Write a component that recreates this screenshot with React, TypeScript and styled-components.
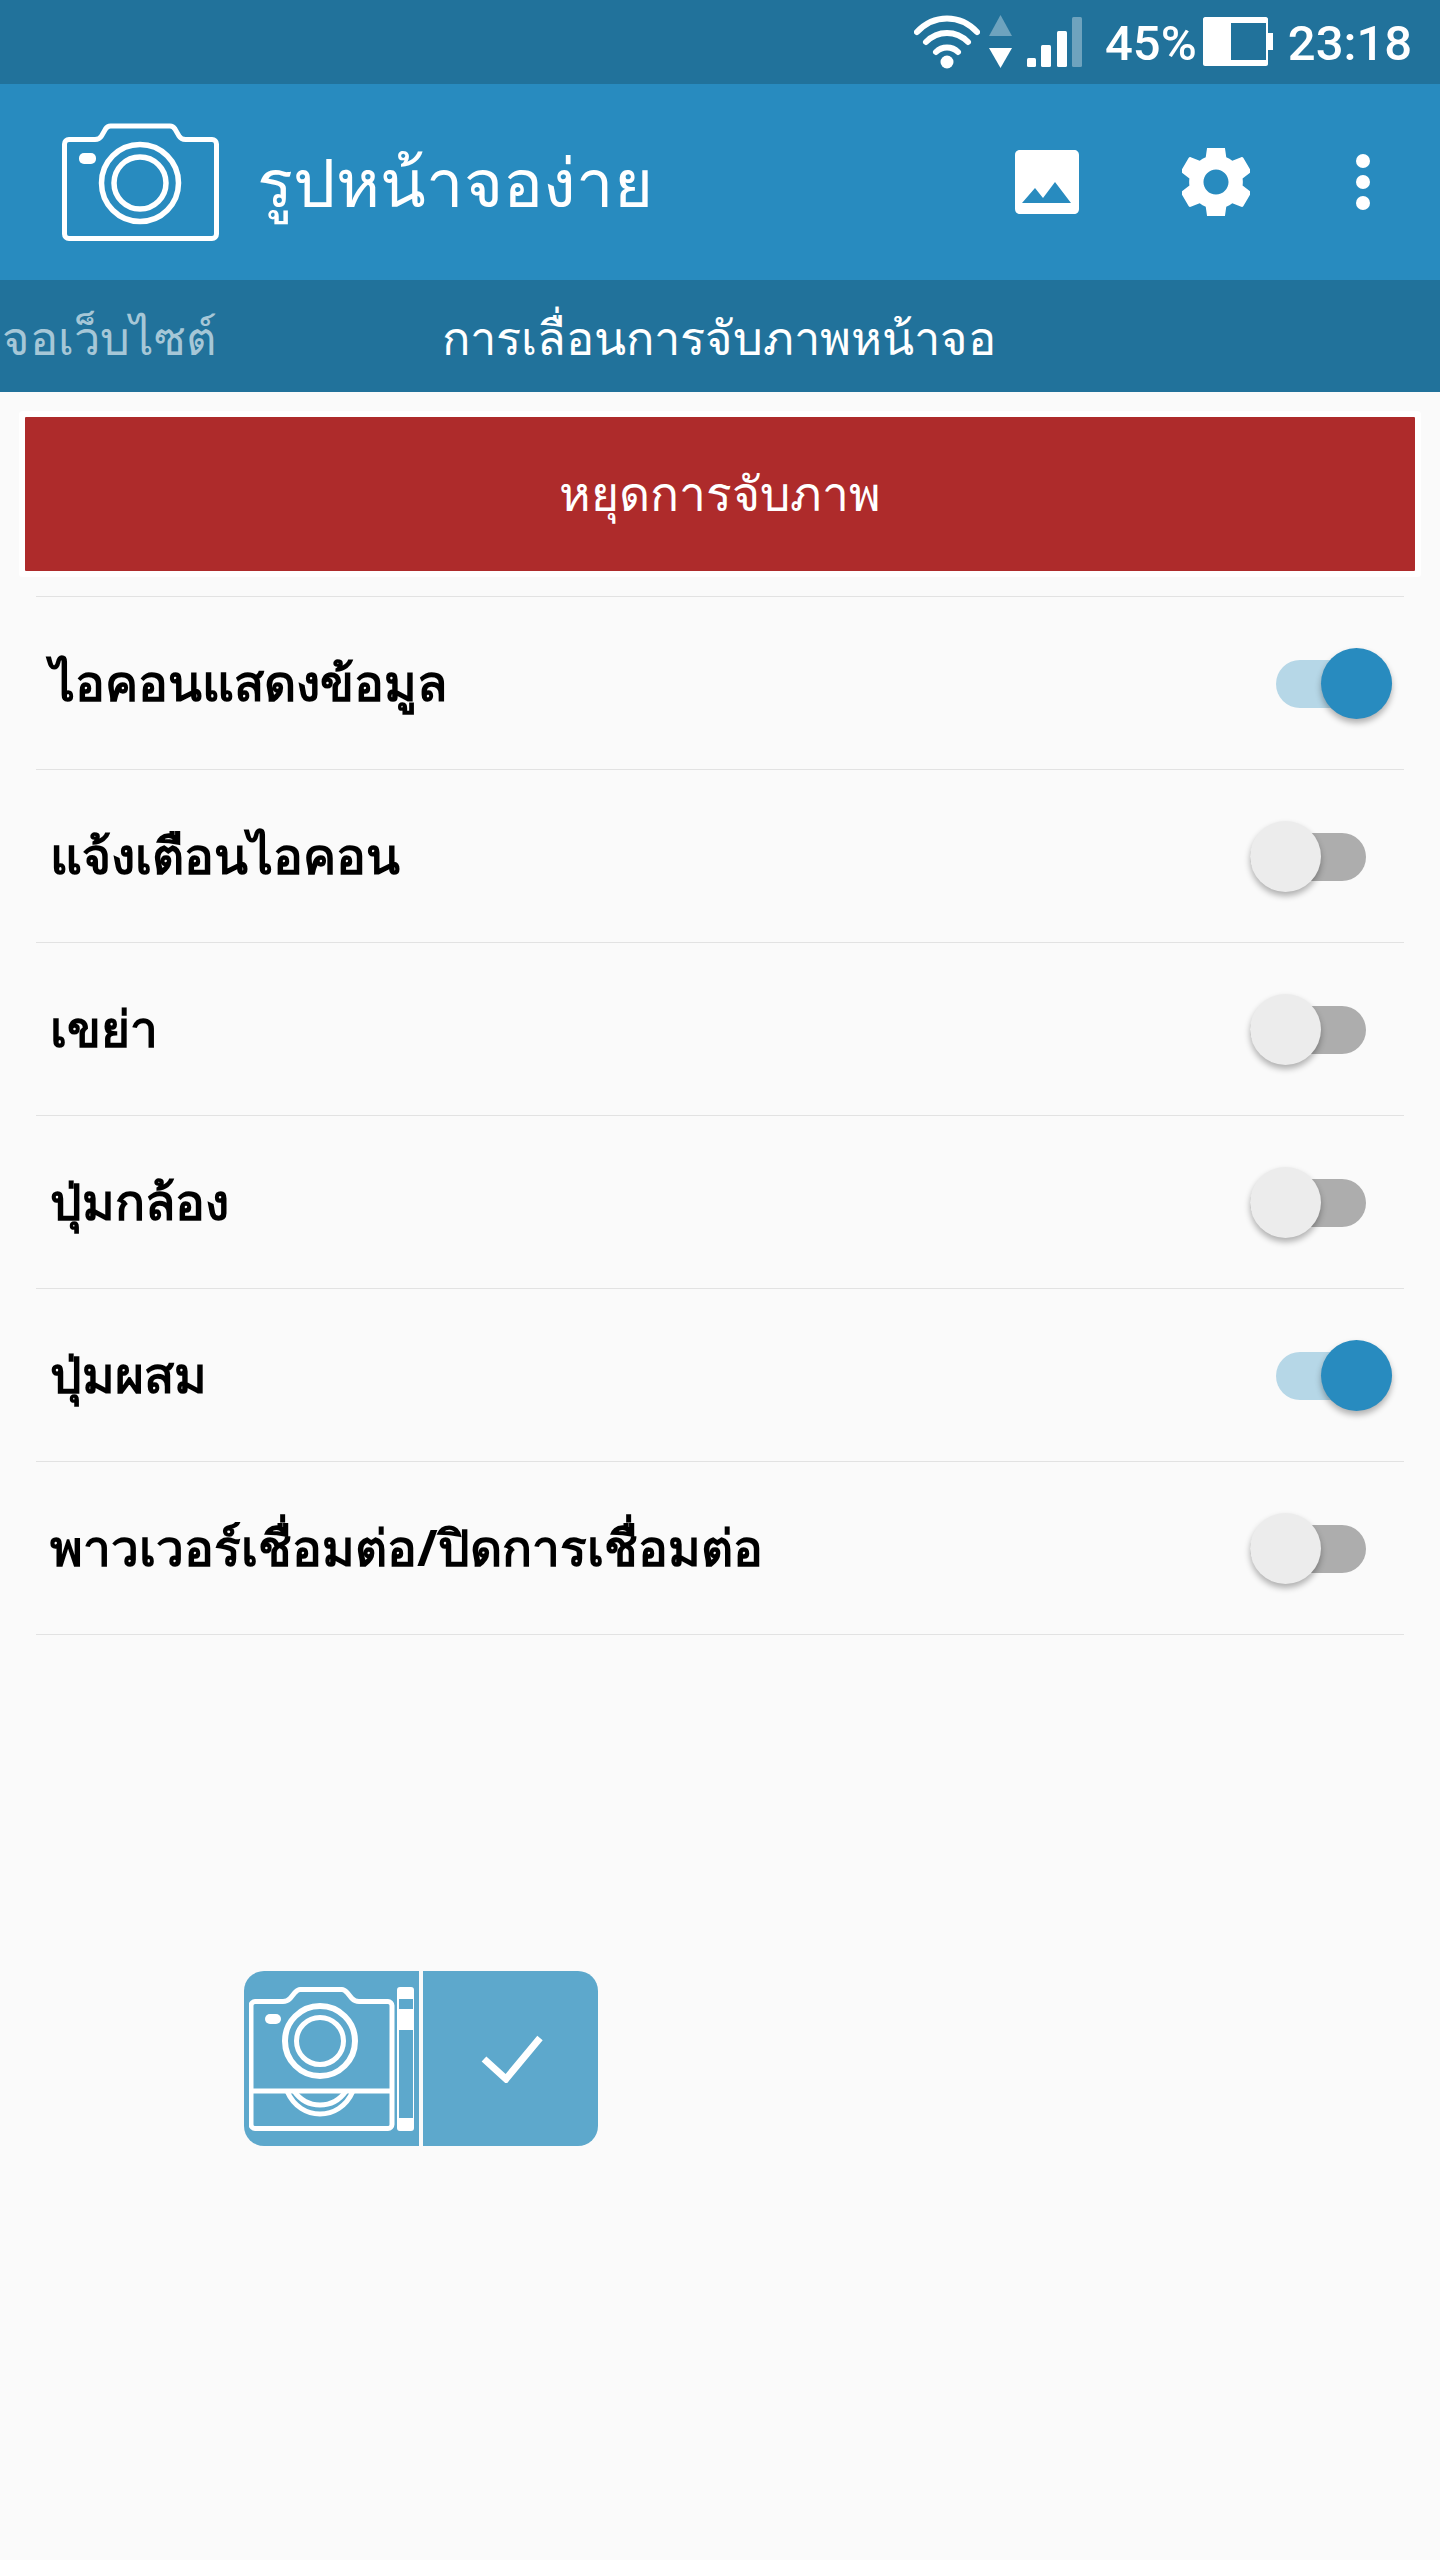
import React from "react";
import styled, { createGlobalStyle } from "styled-components";

const Global = createGlobalStyle`
  html, body { margin: 0; padding: 0; background: #fafafa; }
  * { box-sizing: border-box; }
  body { font-family: "Noto Sans", "Roboto", "DejaVu Sans", sans-serif; }
`;

const Page = styled.div`
  width: 1440px;
  height: 2560px;
  background: #fafafa;
  overflow: hidden;
`;

const StatusBar = styled.div`
  height: 84px;
  background: #21729b;
  display: flex;
  align-items: flex-start;
  padding: 15px 0 0 914px;
  color: #fff;
`;

const StatusText = styled.span<{ $left: number }>`
  font-family: Roboto, sans-serif;
  font-size: 49px;
  font-weight: 500;
  line-height: 58px;
  margin-left: ${(p) => p.$left}px;
  white-space: nowrap;
`;

const StatusSvg = styled.svg<{ $left?: number; $top?: number }>`
  display: block;
  flex: none;
  margin-left: ${(p) => p.$left ?? 0}px;
  margin-top: ${(p) => p.$top ?? 0}px;
`;

const AppBar = styled.header`
  height: 196px;
  background: #288bbf;
  display: flex;
  align-items: center;
  padding-left: 62px;
  color: #fff;
`;

const Logo = styled.svg`
  display: block;
  flex: none;
`;

const Title = styled.h1`
  margin: 3px 0 0 38px;
  font-size: 67px;
  font-weight: 400;
  white-space: nowrap;
  flex: 1;
`;

const Actions = styled.div`
  display: flex;
  align-items: center;
  padding-right: 70px;
`;

const ActionIcon = styled.svg<{ $left: number }>`
  display: block;
  margin-left: ${(p) => p.$left}px;
`;

const TabStrip = styled.nav`
  height: 112px;
  background: #21729b;
  display: flex;
  align-items: center;
  padding: 5px 0 0 2px;
  overflow: hidden;
`;

const Tab = styled.div<{ $active?: boolean }>`
  font-size: 47px;
  color: ${(p) => (p.$active ? "#fff" : "#a6c7d7")};
  white-space: nowrap;
  margin-left: ${(p) => (p.$active ? "222px" : "0")};
  width: ${(p) => (p.$active ? "auto" : "218px")};
`;

const Content = styled.main`
  padding: 25px 25px 0;
`;

const StopButton = styled.button`
  display: block;
  width: 1390px;
  height: 154px;
  border: 0;
  border-radius: 1px;
  background: #ae2b2b;
  color: #fff;
  font-family: inherit;
  font-size: 48px;
  box-shadow: 0 0 0 6px #fff;
`;

const List = styled.ul`
  list-style: none;
  margin: 25px 11px 0;
  padding: 0;
  border-top: 1px solid #e2e2e2;
`;

const Row = styled.li`
  height: 173px;
  display: flex;
  align-items: center;
  padding: 0 12px 0 14px;
  border-bottom: 1px solid #e2e2e2;
`;

const RowLabel = styled.span`
  flex: 1;
  font-size: 49.7px;
  font-weight: 700;
  color: #000;
  white-space: nowrap;
`;

const Switch = styled.div<{ $on?: boolean }>`
  position: relative;
  width: 116px;
  height: 48px;
  margin-top: 2px;
  margin-right: ${(p) => (p.$on ? 0 : 26)}px;
  border-radius: 24px;
  background: ${(p) => (p.$on ? "#b6d7e7" : "#adadad")};
`;

const Thumb = styled.span<{ $on?: boolean }>`
  position: absolute;
  top: -12px;
  ${(p) => (p.$on ? "right: 0;" : "left: 0;")}
  width: 71px;
  height: 71px;
  border-radius: 50%;
  background: ${(p) => (p.$on ? "#288bbf" : "#ececec")};
  box-shadow: 0 4px 6px rgba(0, 0, 0, 0.3);
`;

const Widget = styled.div`
  display: flex;
  width: 354px;
  height: 175px;
  margin: 336px 0 0 219px;
  border-radius: 20px;
  overflow: hidden;
  gap: 4px;
`;

const WidgetCell = styled.div<{ $check?: boolean }>`
  width: 175px;
  background: #5da8cc;
  display: flex;
  align-items: ${(p) => (p.$check ? "center" : "flex-start")};
  justify-content: ${(p) => (p.$check ? "center" : "flex-start")};
  padding: ${(p) => (p.$check ? "0 0 0 2px" : "16px 0 0 5px")};
`;

const rows = [
  { label: "ไอคอนแสดงข้อมูล", on: true },
  { label: "แจ้งเตือนไอคอน", on: false },
  { label: "เขย่า", on: false },
  { label: "ปุ่มกล้อง", on: false },
  { label: "ปุ่มผสม", on: true },
  { label: "พาวเวอร์เชื่อมต่อ/ปิดการเชื่อมต่อ", on: false },
];

export default function App() {
  return (
    <Page>
      <Global />
      <StatusBar>
        <StatusSvg width="66" height="54" viewBox="0 0 66 54">
          <g fill="none" stroke="#fff" strokeWidth="6" strokeLinecap="round">
            <path d="M3 17C20 -1 46 -1 63 17" />
            <path d="M12 27C24 15 42 15 54 27" />
            <path d="M22 37C28 31 38 31 44 37" />
          </g>
          <circle cx="33" cy="47" r="6.5" fill="#fff" />
        </StatusSvg>
        <StatusSvg $left={9} width="23" height="54" viewBox="0 0 23 54">
          <path d="M11.5 0L23 21H0z" fill="#fff" opacity="0.35" />
          <path d="M0 33h23L11.5 53z" fill="#fff" />
        </StatusSvg>
        <StatusSvg $left={15} $top={2} width="55" height="50" viewBox="0 0 55 50">
          <rect x="0" y="41" width="9" height="9" rx="1.5" fill="#fff" />
          <rect x="14" y="28" width="10" height="22" rx="1.5" fill="#fff" />
          <rect x="30" y="14" width="10" height="36" rx="1.5" fill="#fff" />
          <rect x="45" y="0" width="10" height="50" rx="1.5" fill="#fff" opacity="0.35" />
        </StatusSvg>
        <StatusText $left={23}>45%</StatusText>
        <StatusSvg $left={6} $top={2} width="70" height="49" viewBox="0 0 70 49">
          <path d="M2 0h61c1 0 2 1 2 2v14h5v17h-5v14c0 1-1 2-2 2H2c-1 0-2-1-2-2V2c0-1 1-2 2-2zM28 6v37h35V6z" fill="#fff" fillRule="evenodd" />
        </StatusSvg>
        <StatusText $left={15}>23:18</StatusText>
      </StatusBar>

      <AppBar>
        <Logo width="157" height="118" viewBox="0 0 157 118">
          <path
            d="M7 16.5H33c3 0 5-1 6.5-3.5l4-7c1-1.5 3-3 5-3H108c2 0 4 1.5 5 3l4 7c1.5 2.5 3.5 3.5 6.5 3.5H150c2.5 0 4.5 2 4.5 4.5V111c0 2.5-2 4.5-4.5 4.500H7c-2.5 0-4.5-2-4.5-4.5V21c0-2.5 2-4.5 4.5-4.5z"
            fill="none"
            stroke="#fff"
            strokeWidth="5"
          />
          <rect x="17" y="30" width="17" height="11" rx="5" fill="#fff" />
          <circle cx="78" cy="60" r="38.5" fill="none" stroke="#fff" strokeWidth="5.5" />
          <circle cx="78" cy="60" r="26" fill="none" stroke="#fff" strokeWidth="5.5" />
        </Logo>
        <Title>รูปหน้าจอง่าย</Title>
        <Actions>
          <ActionIcon $left={0} width="64" height="64" viewBox="0 0 64 64">
            <path d="M5 0h54c3 0 5 2 5 5v54c0 3-2 5-5 5H5c-3 0-5-2-5-5V5c0-3 2-5 5-5zM7 53h49L40 32 28 48l-8-10z" fill="#fff" fillRule="evenodd" />
          </ActionIcon>
          <ActionIcon $left={103} width="68" height="68" viewBox="2.5 2.5 19 19">
            <path fill="#fff" d="M19.43 12.98c.04-.32.07-.64.07-.98s-.03-.66-.07-.98l2.11-1.65c.19-.15.24-.42.12-.64l-2-3.46c-.12-.22-.39-.3-.61-.22l-2.49 1c-.52-.4-1.08-.73-1.69-.98l-.38-2.65C14.46 2.18 14.25 2 14 2h-4c-.25 0-.46.18-.49.42l-.38 2.65c-.61.25-1.17.59-1.69.98l-2.49-1c-.23-.09-.49 0-.61.22l-2 3.46c-.13.22-.07.49.12.64l2.11 1.65c-.04.32-.07.65-.07.98s.03.66.07.98l-2.11 1.65c-.19.15-.24.42-.12.64l2 3.46c.12.22.39.3.61.22l2.49-1c.52.4 1.08.73 1.69.98l.38 2.65c.03.24.24.42.49.42h4c.25 0 .46-.18.49-.42l.38-2.65c.61-.25 1.17-.59 1.69-.98l2.49 1c.23.09.49 0 .61-.22l2-3.46c.12-.22.07-.49-.12-.64l-2.11-1.65zM12 15.5c-1.93 0-3.5-1.57-3.5-3.5s1.57-3.5 3.5-3.5 3.5 1.57 3.5 3.5-1.57 3.5-3.5 3.5z" />
          </ActionIcon>
          <ActionIcon $left={106} width="14" height="56" viewBox="0 0 14 56">
            <circle cx="7" cy="7" r="7" fill="#fff" />
            <circle cx="7" cy="28" r="7" fill="#fff" />
            <circle cx="7" cy="49" r="7" fill="#fff" />
          </ActionIcon>
        </Actions>
      </AppBar>

      <TabStrip>
        <Tab>จอเว็บไซต์</Tab>
        <Tab $active>การเลื่อนการจับภาพหน้าจอ</Tab>
      </TabStrip>

      <Content>
        <StopButton>หยุดการจับภาพ</StopButton>
        <List>
          {rows.map((r) => (
            <Row key={r.label}>
              <RowLabel>{r.label}</RowLabel>
              <Switch $on={r.on}>
                <Thumb $on={r.on} />
              </Switch>
            </Row>
          ))}
        </List>
        <Widget>
          <WidgetCell>
            <svg width="165" height="144" viewBox="0 0 165 144">
              <g fill="none" stroke="#fff" strokeWidth="5">
                <path d="M6 14.5h28c3 0 5-1 7-3l5-6c1-1 3-3 5-3h42c2 0 4 2 5 3l5 6c2 2 4 3 7 3h29c2 0 4 2 4 4V137.5c0 2-2 4-4 4H6c-2 0-4-2-4-4V18.5c0-2 2-4 4-4z" />
                <path d="M2 104h139" />
                <path d="M38 104c7 16 20 23 33 23s26-7 33-23" />
                <path d="M45 104c7 10 16 14 26 14s19-4 26-14" />
              </g>
              <circle cx="71" cy="54" r="35" fill="none" stroke="#fff" strokeWidth="6" />
              <circle cx="71" cy="54" r="23.5" fill="none" stroke="#fff" strokeWidth="5" />
              <rect x="16" y="27" width="16" height="10" rx="5" fill="#fff" />
              <path fillRule="evenodd" fill="#fff" d="M151 0h11c2 0 3 1 3 3v138c0 2-1 3-3 3h-11c-2 0-3-1-3-3V3c0-2 1-3 3-3zM150 12v10h14V12zM150 43v88h14V43z" />
            </svg>
          </WidgetCell>
          <WidgetCell $check>
            <svg width="62" height="48" viewBox="0 0 62 48">
              <path d="M3 24l22 20L59 3" fill="none" stroke="#fff" strokeWidth="7" />
            </svg>
          </WidgetCell>
        </Widget>
      </Content>
    </Page>
  );
}
